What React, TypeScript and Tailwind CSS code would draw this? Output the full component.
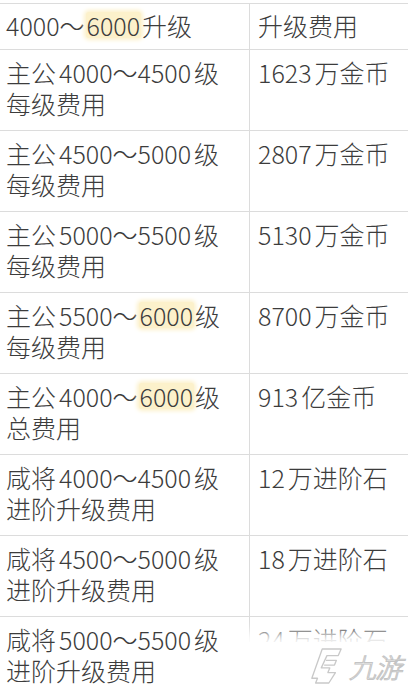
import type { ReactNode } from "react"

const G = () => <i className="inline-block w-[3px]" />

function Mark({ children }: { children: ReactNode }) {
  return (
    <span className="mx-[1px] inline-block rounded-[3px] bg-[#fcf1cb] px-[1px] leading-[26px] shadow-[0_0_4px_2px_#fcf1cb]">
      {children}
    </span>
  )
}

const rows: { left: ReactNode; right: ReactNode }[] = [
  { left: <>主公<G />4000～4500<G />级<br />每级费用</>, right: <>1623<G />万金币</> },
  { left: <>主公<G />4500～5000<G />级<br />每级费用</>, right: <>2807<G />万金币</> },
  { left: <>主公<G />5000～5500<G />级<br />每级费用</>, right: <>5130<G />万金币</> },
  { left: <>主公<G />5500～<Mark>6000</Mark>级<br />每级费用</>, right: <>8700<G />万金币</> },
  { left: <>主公<G />4000～<Mark>6000</Mark>级<br />总费用</>, right: <>913<G />亿金币</> },
  { left: <>咸将<G />4000～4500<G />级<br />进阶升级费用</>, right: <>12<G />万进阶石</> },
  { left: <>咸将<G />4500～5000<G />级<br />进阶升级费用</>, right: <>18<G />万进阶石</> },
  { left: <>咸将<G />5000～5500<G />级<br />进阶升级费用</>, right: <>24<G />万进阶石</> },
]

function Watermark() {
  return (
    <div className="absolute bottom-0 right-0 h-[60px] w-[182px]">
      {/* white haze */}
      <div className="absolute inset-0 bg-white/95 blur-[6px]" />
      <div className="absolute inset-x-0 bottom-0 top-[10px] bg-white" />
      <div className="absolute right-[3px] bottom-[6px] flex items-center gap-[6px]">
        <svg width="34" height="40" viewBox="0 0 36 40" fill="none" stroke="#c9c9c9" strokeWidth="1.4" strokeLinejoin="round">
          <path d="M14 2 L34 2 L31 9 L19 9 L13 22 L22 22 L20 27 L28 27 L21 38 L7 38 L9 33 L3 33 Z" />
          <path d="M18 14 L29 14 L27 19 L16 19" />
        </svg>
        <span
          className="pr-[4px] italic text-[27px] leading-none tracking-[-1px] text-transparent [-webkit-text-stroke:1px_#c4c4c4]"
          style={{ fontFamily: '"Noto Sans CJK SC", sans-serif' }}
        >
          九游
        </span>
      </div>
    </div>
  )
}

export default function App() {
  return (
    <div
      className="relative h-[692px] w-[408px] overflow-hidden bg-white pt-[3px] text-[25px] font-light leading-[31px] text-[#3c3c3c]"
      style={{ fontFamily: '"Noto Sans CJK SC", "Noto Sans", sans-serif' }}
    >
      <div className="border-t border-[#dcdcdc]">
        {/* header */}
        <div className="flex h-[46px] border-b border-[#dcdcdc]">
          <div className="w-[250px] shrink-0 border-r border-[#dcdcdc] pl-[6px] pt-[6px]">
            4000～<Mark>6000</Mark>升级
          </div>
          <div className="pl-[8px] pt-[6px]">升级费用</div>
        </div>

        {rows.map((row, i) => (
          <div key={i} className="flex h-[81px] border-b border-[#dcdcdc]">
            <div className="w-[250px] shrink-0 border-r border-[#dcdcdc] pl-[6px] pt-[7px]">{row.left}</div>
            <div className="pl-[8px] pt-[7px]">{row.right}</div>
          </div>
        ))}
      </div>

      <Watermark />
    </div>
  )
}
